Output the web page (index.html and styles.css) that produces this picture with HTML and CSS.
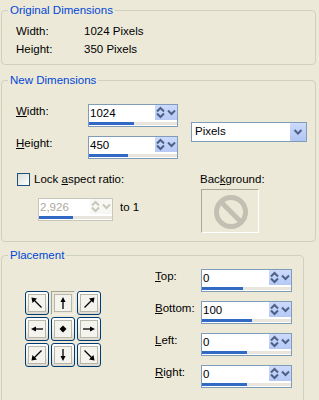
FILE: index.html
```html
<!DOCTYPE html>
<html>
<head>
<meta charset="utf-8">
<link rel="stylesheet" href="styles.css">
</head>
<body>
<fieldset class="group g1">
  <legend>Original Dimensions</legend>
  <div class="g1-body">
    <div class="info-row"><span class="info-label">Width:</span><span>1024 Pixels</span></div>
    <div class="info-row"><span class="info-label">Height:</span><span>350 Pixels</span></div>
  </div>
</fieldset>

<fieldset class="group g2">
  <legend>New Dimensions</legend>
  <div class="g2-body">
    <div class="dims-top">
      <div class="dims-fields">
        <div class="field">
          <span class="field-label"><u>W</u>idth:</span>
          <div class="spin">
            <div class="spin-main"><span class="spin-value">1024</span>
              <span class="spin-btn"><svg width="11" height="15" viewBox="0 0 11 15"><polyline points="2,6.5 5.5,3 9,6.5" class="chev"/><polyline points="2,8.5 5.5,12 9,8.5" class="chev"/></svg></span>
              <span class="spin-btn"><svg width="11" height="15" viewBox="0 0 11 15"><polyline points="2,5.5 5.5,9 9,5.5" class="chev"/></svg></span>
            </div>
            <div class="spin-track"><div class="spin-fill" style="width:45px"></div></div>
          </div>
        </div>
        <div class="field">
          <span class="field-label"><u>H</u>eight:</span>
          <div class="spin">
            <div class="spin-main"><span class="spin-value">450</span>
              <span class="spin-btn"><svg width="11" height="15" viewBox="0 0 11 15"><polyline points="2,6.5 5.5,3 9,6.5" class="chev"/><polyline points="2,8.5 5.5,12 9,8.5" class="chev"/></svg></span>
              <span class="spin-btn"><svg width="11" height="15" viewBox="0 0 11 15"><polyline points="2,5.5 5.5,9 9,5.5" class="chev"/></svg></span>
            </div>
            <div class="spin-track"><div class="spin-fill" style="width:39px"></div></div>
          </div>
        </div>
      </div>
      <div class="select">
        <span class="select-value">Pixels</span>
        <span class="select-btn"><svg width="16" height="18" viewBox="0 0 16 18"><polyline points="4.5,7 8,10.5 11.5,7" class="chev"/></svg></span>
      </div>
    </div>
    <div class="dims-bottom">
      <div class="ratio-col">
        <div class="check-row"><span class="checkbox"></span><span>Lock <u>a</u>spect ratio:</span></div>
        <div class="ratio-row">
          <div class="spin spin-ratio disabled">
            <div class="spin-main"><span class="spin-value">2,926</span>
              <span class="spin-btn"><svg width="11" height="15" viewBox="0 0 11 15"><polyline points="2,6.5 5.5,3 9,6.5" class="chev"/><polyline points="2,8.5 5.5,12 9,8.5" class="chev"/></svg></span>
              <span class="spin-btn"><svg width="11" height="15" viewBox="0 0 11 15"><polyline points="2,5.5 5.5,9 9,5.5" class="chev"/></svg></span>
            </div>
            <div class="spin-track"><div class="spin-fill" style="width:34px"></div></div>
          </div>
          <span class="to-one">to 1</span>
        </div>
      </div>
      <div class="bg-col">
        <span>Bac<u>k</u>ground:</span>
        <div class="bg-box">
          <svg width="56" height="42" viewBox="0 0 56 42"><circle cx="29" cy="22" r="14.5" fill="none" stroke="#C3C0B3" stroke-width="5"/><line x1="19" y1="12" x2="39" y2="32" stroke="#C3C0B3" stroke-width="5"/></svg>
        </div>
      </div>
    </div>
  </div>
</fieldset>

<fieldset class="group g3">
  <legend>Placement</legend>
  <div class="g3-body">
    <div class="pgrid">
      <div class="pbtn"><div class="pin"><svg width="16" height="16" viewBox="0 0 16 16"><line x1="12.5" y1="12.5" x2="5" y2="5" class="ar"/><polygon points="2.5,2.5 8,3.5 3.5,8" class="ah"/></svg></div></div>
      <div class="pbtn sel"><div class="pin"><svg width="16" height="16" viewBox="0 0 16 16"><line x1="8" y1="14" x2="8" y2="5" class="ar"/><polygon points="8,2 5.5,7 10.5,7" class="ah"/></svg></div></div>
      <div class="pbtn"><div class="pin"><svg width="16" height="16" viewBox="0 0 16 16"><line x1="3.5" y1="12.5" x2="11" y2="5" class="ar"/><polygon points="13.5,2.5 8,3.5 12.5,8" class="ah"/></svg></div></div>
      <div class="pbtn"><div class="pin"><svg width="16" height="16" viewBox="0 0 16 16"><line x1="14" y1="8" x2="5" y2="8" class="ar"/><polygon points="2,8 7,5.5 7,10.5" class="ah"/></svg></div></div>
      <div class="pbtn"><div class="pin"><svg width="16" height="16" viewBox="0 0 16 16"><polygon points="8,4.5 11.5,8 8,11.5 4.5,8" class="ah"/></svg></div></div>
      <div class="pbtn"><div class="pin"><svg width="16" height="16" viewBox="0 0 16 16"><line x1="2" y1="8" x2="11" y2="8" class="ar"/><polygon points="14,8 9,5.5 9,10.5" class="ah"/></svg></div></div>
      <div class="pbtn"><div class="pin"><svg width="16" height="16" viewBox="0 0 16 16"><line x1="12.5" y1="3.5" x2="5" y2="11" class="ar"/><polygon points="2.5,13.5 3.5,8 8,12.5" class="ah"/></svg></div></div>
      <div class="pbtn"><div class="pin"><svg width="16" height="16" viewBox="0 0 16 16"><line x1="8" y1="2" x2="8" y2="11" class="ar"/><polygon points="8,14 5.5,9 10.5,9" class="ah"/></svg></div></div>
      <div class="pbtn"><div class="pin"><svg width="16" height="16" viewBox="0 0 16 16"><line x1="3.5" y1="3.5" x2="11" y2="11" class="ar"/><polygon points="13.5,13.5 12.5,8 8,12.5" class="ah"/></svg></div></div>
    </div>
    <div class="pfields">
      <div class="pfield"><span class="pfield-label"><u>T</u>op:</span>
        <div class="spin spin-place">
          <div class="spin-main"><span class="spin-value">0</span>
            <span class="spin-btn"><svg width="11" height="15" viewBox="0 0 11 15"><polyline points="2,6.5 5.5,3 9,6.5" class="chev"/><polyline points="2,8.5 5.5,12 9,8.5" class="chev"/></svg></span>
            <span class="spin-btn"><svg width="11" height="15" viewBox="0 0 11 15"><polyline points="2,5.5 5.5,9 9,5.5" class="chev"/></svg></span>
          </div>
          <div class="spin-track"><div class="spin-fill" style="width:41px"></div></div>
        </div>
      </div>
      <div class="pfield"><span class="pfield-label"><u>B</u>ottom:</span>
        <div class="spin spin-place">
          <div class="spin-main"><span class="spin-value">100</span>
            <span class="spin-btn"><svg width="11" height="15" viewBox="0 0 11 15"><polyline points="2,6.5 5.5,3 9,6.5" class="chev"/><polyline points="2,8.5 5.5,12 9,8.5" class="chev"/></svg></span>
            <span class="spin-btn"><svg width="11" height="15" viewBox="0 0 11 15"><polyline points="2,5.5 5.5,9 9,5.5" class="chev"/></svg></span>
          </div>
          <div class="spin-track"><div class="spin-fill" style="width:50px"></div></div>
        </div>
      </div>
      <div class="pfield"><span class="pfield-label"><u>L</u>eft:</span>
        <div class="spin spin-place">
          <div class="spin-main"><span class="spin-value">0</span>
            <span class="spin-btn"><svg width="11" height="15" viewBox="0 0 11 15"><polyline points="2,6.5 5.5,3 9,6.5" class="chev"/><polyline points="2,8.5 5.5,12 9,8.5" class="chev"/></svg></span>
            <span class="spin-btn"><svg width="11" height="15" viewBox="0 0 11 15"><polyline points="2,5.5 5.5,9 9,5.5" class="chev"/></svg></span>
          </div>
          <div class="spin-track"><div class="spin-fill" style="width:45px"></div></div>
        </div>
      </div>
      <div class="pfield"><span class="pfield-label"><u>R</u>ight:</span>
        <div class="spin spin-place">
          <div class="spin-main"><span class="spin-value">0</span>
            <span class="spin-btn"><svg width="11" height="15" viewBox="0 0 11 15"><polyline points="2,6.5 5.5,3 9,6.5" class="chev"/><polyline points="2,8.5 5.5,12 9,8.5" class="chev"/></svg></span>
            <span class="spin-btn"><svg width="11" height="15" viewBox="0 0 11 15"><polyline points="2,5.5 5.5,9 9,5.5" class="chev"/></svg></span>
          </div>
          <div class="spin-track"><div class="spin-fill" style="width:45px"></div></div>
        </div>
      </div>
    </div>
  </div>
</fieldset>
</body>
</html>
```
FILE: styles.css
```css
* { box-sizing: border-box; }
html, body { margin: 0; padding: 0; }
body {
  background: #ECE9D8;
  font-family: "Liberation Sans", Arial, sans-serif;
  font-size: 11.5px;
  line-height: 13px;
  color: #000;
  width: 319px;
  height: 400px;
  overflow: hidden;
}
u { text-decoration: underline; text-underline-offset: 1px; }

.group {
  border: 1px solid #D0D0BF;
  border-radius: 4px;
  margin: 0 3px 0 1px;
  padding: 0;
  min-width: 0;
}
.group legend {
  color: #0046D5;
  padding: 0 2px;
  margin-left: 6px;
  line-height: 13px;
}
.g1 { margin-top: 4px; }
.g1-body { padding: 5px 0 6px 14px; }
.info-row { display: flex; line-height: 18px; }
.info-label { width: 68px; }

.g2 { margin-top: 9px; }
.g2-body { padding: 17px 0 8px 14px; }
.dims-top { display: flex; align-items: center; }
.dims-fields { display: flex; flex-direction: column; gap: 9px; }
.field { display: flex; align-items: flex-start; }
.field-label { width: 72px; padding-top: 1px; }

.spin {
  width: 90px;
  height: 23px;
  border: 1px solid #7F9DB9;
  background: #fff;
  display: flex;
  flex-direction: column;
}
.spin-main { display: flex; height: 16px; }
.spin-value {
  flex: 1;
  padding-left: 1px;
  line-height: 16px;
}
.spin-btn {
  width: 11px;
  height: 15px;
  background: linear-gradient(#CCDAFC, #B6C9F6);
  display: flex;
}
.chev { fill: none; stroke: #4D6185; stroke-width: 2; }
.spin-track {
  height: 5px;
  padding-top: 1px;
  position: relative;
}
.spin-track::before {
  content: "";
  display: block;
  height: 3px;
  background: #E8E6DC;
}
.spin-fill {
  position: absolute;
  left: 0;
  top: 1px;
  height: 3px;
  background: #316AC5;
}

.select {
  margin-left: 13px;
  width: 116px;
  height: 20px;
  border: 1px solid #7F9DB9;
  background: #fff;
  display: flex;
  align-items: center;
}
.select-value { flex: 1; padding-left: 3px; }
.select-btn {
  width: 16px;
  height: 18px;
  background: linear-gradient(#CCDAFC, #B1C5F5);
  border-radius: 1px;
  display: flex;
}

.dims-bottom { display: flex; margin-top: 14px; }
.ratio-col { width: 184px; }
.check-row { display: flex; align-items: center; gap: 4px; margin-left: 1px; height: 13px; }
.checkbox {
  width: 13px;
  height: 13px;
  border: 1px solid #1C5180;
  background: linear-gradient(135deg, #DCDCD7, #FFFFFF);
}
.ratio-row { display: flex; align-items: flex-start; margin-top: 12px; margin-left: 22px; }
.spin-ratio { width: 75px; }
.disabled { border-color: #C9C7BA; }
.disabled .spin-value { color: #ACA899; }
.disabled .spin-btn { background: #F7F7F4; }
.disabled .chev { stroke: #C9C7BA; }
.to-one { margin-left: 7px; margin-top: 1px; line-height: 16px; }

.bg-col { display: flex; flex-direction: column; align-items: flex-start; }
.bg-box {
  margin-top: 3px;
  margin-left: 1px;
  width: 58px;
  height: 44px;
  border: 1px solid;
  border-color: #ACA899 #FFFFFF #FFFFFF #ACA899;
  display: flex;
}

.g3 { margin-top: 7px; margin-right: 15px; height: 200px; }
.g3-body { display: flex; align-items: center; padding: 7px 0 0 23px; }
.pgrid {
  display: grid;
  grid-template-columns: repeat(3, 24px);
  grid-auto-rows: 24px;
  gap: 2px;
}
.pbtn {
  border: 1px solid #003C74;
  border-radius: 3px;
  background: linear-gradient(#FFFFFF, #F2F1EB 60%, #DCD7CB);
  display: flex;
  align-items: center;
  justify-content: center;
}
.pbtn.sel {
  border-color: #A5A396 #F5F4EF #F5F4EF #A5A396;
  border-radius: 0;
  background: #ECE9D8;
}
.pin {
  width: 18px;
  height: 18px;
  border: 1px solid #B9B6AA;
  background: #F4F3EE;
  display: flex;
}
.ar { stroke: #000; stroke-width: 1.3; }
.ah { fill: #000; }

.pfields { margin-left: 54px; display: flex; flex-direction: column; gap: 9px; }
.pfield { display: flex; align-items: flex-start; }
.pfield-label { width: 46px; padding-top: 1px; }
.spin-place { width: 91px; }
```
